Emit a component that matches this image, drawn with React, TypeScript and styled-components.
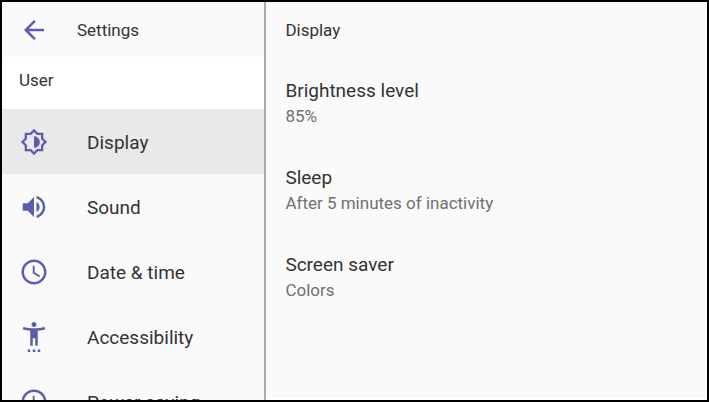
import React from "react";
import styled, { createGlobalStyle } from "styled-components";

const GlobalStyle = createGlobalStyle`
  *, *::before, *::after { box-sizing: border-box; }
  body {
    margin: 0;
    background: #fafafa;
    color: #333;
    font-family: Roboto, "Liberation Sans", sans-serif;
  }
  h1, h2, p { margin: 0; font-weight: 400; }
`;

const Screen = styled.div`
  display: grid;
  grid-template-columns: 3fr 5fr;
  height: 100vh;
  overflow: hidden;
  border: 2px solid #000;
  background: #fafafa;
`;

const Sidebar = styled.aside`
  min-width: 0;
  overflow: hidden;
  border-right: 2px solid #ababab;
`;

const Toolbar = styled.header`
  display: flex;
  align-items: center;
  gap: 28px;
  height: 55px;
  padding-left: 17px;
`;

const BackButton = styled.button`
  display: flex;
  padding: 0;
  border: 0;
  background: none;
  color: #5a5db0;
  cursor: pointer;
`;

const Title = styled.h1`
  font-size: 17px;
  line-height: 20px;
`;

const SectionLabel = styled.h2`
  height: 52px;
  padding: 13px 17px;
  background: #fff;
  font-size: 17px;
  line-height: 20px;
`;

const Category = styled.button<{ $active?: boolean }>`
  display: flex;
  align-items: center;
  gap: 38px;
  width: 100%;
  height: 65px;
  padding: 1px 0 0 17px;
  border: 0;
  background: ${(p) => (p.$active ? "#e9e9e9" : "transparent")};
  color: inherit;
  font: inherit;
  font-size: 19px;
  line-height: 25px;
  text-align: left;
  white-space: nowrap;
  cursor: pointer;
`;

const IconSlot = styled.span`
  display: flex;
  justify-content: center;
  flex: 0 0 30px;
  color: #5a5db0;
`;

const Panel = styled.main`
  min-width: 0;
  padding: 0 19px;
  border-right: 2px solid #fff;
  border-bottom: 2px solid #fff;
`;

const PanelHeader = styled.header`
  display: flex;
  align-items: center;
  height: 55px;
`;

const Settings = styled.div`
  display: flex;
  flex-direction: column;
  gap: 38px;
  padding-top: 20px;
`;

const Setting = styled.button`
  display: flex;
  flex-direction: column;
  gap: 2px;
  padding: 0;
  border: 0;
  background: none;
  color: inherit;
  font: inherit;
  text-align: left;
  cursor: pointer;
`;

const SettingName = styled.span`
  font-size: 19px;
  line-height: 27px;
`;

const SettingValue = styled.span`
  color: #707070;
  font-size: 17px;
  line-height: 20px;
`;

const Icon = ({ d, size = 30 }: { d: string; size?: number }) => (
  <svg width={size} height={size} viewBox="0 0 24 24" fill="currentColor" fillRule="evenodd" aria-hidden="true">
    <path d={d} />
  </svg>
);

const arrow = "M20 11H7.83l5.59-5.59L12 4l-8 8 8 8 1.41-1.41L7.83 13H20v-2z";
const brightness =
  "M20 15.31L23.31 12 20 8.69V4h-4.69L12 .69 8.69 4H4v4.69L.69 12 4 15.31V20h4.69L12 23.31 15.31 20H20v-4.69zM18 14.48V18h-3.52L12 20.48 9.52 18H6v-3.52L3.52 12 6 9.52V6h3.52L12 3.52 14.48 6H18v3.52L20.48 12 18 14.48zM12 7v10c2.76 0 5-2.24 5-5s-2.24-5-5-5z";
const volume =
  "M3 9v6h4l5 5V4L7 9H3zm13.5 3c0-1.77-1.02-3.29-2.5-4.03v8.05c1.48-.73 2.5-2.25 2.5-4.02zM14 3.23v2.06c2.89.86 5 3.54 5 6.71s-2.11 5.85-5 6.71v2.06c4.01-.91 7-4.49 7-8.77s-2.99-7.86-7-8.77z";
const clock =
  "M11.99 2C6.47 2 2 6.48 2 12s4.47 10 9.99 10C17.52 22 22 17.52 22 12S17.52 2 11.99 2zM12 20c-4.42 0-8-3.58-8-8s3.58-8 8-8 8 3.58 8 8-3.58 8-8 8zM12.5 7H11v6l5.25 3.15.75-1.23-4.5-2.67V7z";
const person =
  "M20.5 4c-2.61.7-5.67 1-8.5 1s-5.89-.3-8.5-1L3 6c1.86.5 4 .83 6 1v12h2v-6h2v6h2V7c2-.17 4.14-.5 6-1l-.5-2zM12 4c1.1 0 2-.9 2-2s-.9-2-2-2-2 .9-2 2 .9 2 2 2zM7 24h2v-2H7v2zm4 0h2v-2h-2v2zm4 0h2v-2h-2v2z";

const categories = [
  { label: "Display", icon: brightness, size: 28 },
  { label: "Sound", icon: volume },
  { label: "Date & time", icon: clock },
  { label: "Accessibility", icon: person },
  { label: "Power saving", icon: clock },
];

const settings = [
  { name: "Brightness level", value: "85%" },
  { name: "Sleep", value: "After 5 minutes of inactivity" },
  { name: "Screen saver", value: "Colors" },
];

export default function App() {
  const [active, setActive] = React.useState("Display");
  return (
    <>
      <GlobalStyle />
      <Screen>
        <Sidebar>
          <Toolbar>
            <BackButton aria-label="Back">
              <Icon d={arrow} />
            </BackButton>
            <Title>Settings</Title>
          </Toolbar>
          <SectionLabel>User</SectionLabel>
          <nav>
            {categories.map((c) => (
              <Category key={c.label} $active={c.label === active} onClick={() => setActive(c.label)}>
                <IconSlot>
                  <Icon d={c.icon} size={c.size} />
                </IconSlot>
                {c.label}
              </Category>
            ))}
          </nav>
        </Sidebar>
        <Panel>
          <PanelHeader>
            <Title as="h2">{active}</Title>
          </PanelHeader>
          <Settings>
            {settings.map((s) => (
              <Setting key={s.name}>
                <SettingName>{s.name}</SettingName>
                <SettingValue>{s.value}</SettingValue>
              </Setting>
            ))}
          </Settings>
        </Panel>
      </Screen>
    </>
  );
}
